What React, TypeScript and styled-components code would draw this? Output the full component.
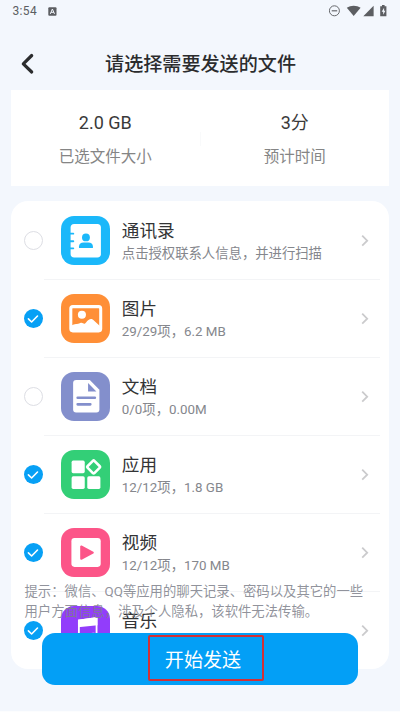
import React, { useState } from "react";
import styled, { createGlobalStyle } from "styled-components";

const GlobalStyle = createGlobalStyle`
  *, *::before, *::after { box-sizing: border-box; }
  body {
    margin: 0;
    background: #f3f7fd;
    font-family: Roboto, "Noto Sans CJK SC", sans-serif;
    color: #333;
  }
`;

const Screen = styled.div`
  position: relative;
  width: 400px;
  height: 712px;
  overflow: hidden;
  background: #f3f7fd;
  border-bottom: 1px solid #fcfdfe;
`;

const StatusBar = styled.div`
  height: 22px;
  padding: 0 13px 0 12.5px;
  display: flex;
  align-items: center;
  justify-content: space-between;
  color: #5c5e62;
`;

const StatusGroup = styled.div<{ $gap: number }>`
  display: flex;
  align-items: center;
  gap: ${(p) => p.$gap}px;
  svg { display: block; }
`;

const Clock = styled.span`
  padding-top: 1px;
  font-size: 12px;
  line-height: 21px;
  letter-spacing: 0.35px;
`;

const Header = styled.header`
  height: 68px;
  padding-top: 15px;
  display: grid;
  grid-template-columns: 60px 1fr 59px;
  align-items: center;
`;

const BackButton = styled.button`
  border: 0;
  padding: 0 0 0 20px;
  background: none;
  display: flex;
`;

const Title = styled.h1`
  margin: 2px 0 0;
  font-size: 19.1px;
  line-height: 28px;
  font-weight: 500;
  text-align: center;
  white-space: nowrap;
  color: #2b2c2e;
`;

const Summary = styled.section`
  height: 96px;
  margin: 0 11px;
  padding-top: 2px;
  background: #fff;
  display: grid;
  grid-template-columns: 1fr 1px 1fr;
  align-items: center;
`;

const Stat = styled.div`
  text-align: center;
`;

const StatValue = styled.div`
  font-size: 18px;
  line-height: 28px;
  color: #3a3a3a;
`;

const StatLabel = styled.div`
  margin-top: 8px;
  font-size: 15.5px;
  line-height: 24px;
  color: #858585;
`;

const StatDivider = styled.div`
  height: 14px;
  background: #f9fafb;
`;

const FileList = styled.section`
  height: 468px;
  margin: 15px 11px 0;
  border-radius: 17px;
  background: #fff;
`;

const Row = styled.div`
  height: 78px;
  padding-left: 12.5px;
  display: grid;
  grid-template-columns: 20px 1fr;
`;

const Check = styled.button<{ $on: boolean }>`
  align-self: center;
  width: 19.6px;
  height: 19.6px;
  margin-top: 1px;
  padding: 0;
  border: ${(p) => (p.$on ? "0" : "1.5px solid #dddee4")};
  border-radius: 50%;
  background: ${(p) => (p.$on ? "#07a0f5" : "#fff")};
  display: flex;
  align-items: center;
  justify-content: center;
`;

const RowBody = styled.div<{ $last: boolean }>`
  margin: 0 9px 0 0.5px;
  padding: 0 11px 0 17px;
  display: flex;
  align-items: center;
  box-shadow: 0 1px 0 ${(p) => (p.$last ? "transparent" : "#f3f4f6")};
`;

const Tile = styled.div<{ $color: string }>`
  flex: none;
  width: 48.5px;
  height: 48.5px;
  margin-top: 0.5px;
  border-radius: 13px;
  background: ${(p) => p.$color};
  svg { display: block; }
`;

const RowText = styled.div`
  flex: 1;
  margin-left: 12.3px;
  padding-top: 3px;
  white-space: nowrap;
`;

const RowName = styled.div`
  font-size: 17.6px;
  line-height: 25px;
  color: #333436;
`;

const RowDetail = styled.div`
  font-size: 13.35px;
  line-height: 20px;
  color: #85878d;
`;

const Footer = styled.footer`
  position: absolute;
  left: 0;
  right: 0;
  top: 582px;
`;

const Hint = styled.p`
  margin: 0 24px 11px 24.5px;
  font-size: 13.35px;
  line-height: 20px;
  white-space: nowrap;
  color: rgba(125, 128, 138, 0.85);
`;

const SendButton = styled.button`
  display: flex;
  align-items: center;
  justify-content: center;
  width: 316px;
  height: 52px;
  margin-left: 42px;
  padding: 0 0 0 12px;
  border: 0;
  border-radius: 13px;
  background: #039ff6;
  font-family: inherit;
  font-size: 19.1px;
  color: #fff;
`;

const Highlight = styled.span`
  display: flex;
  align-items: center;
  justify-content: center;
  width: 116px;
  height: 46px;
  margin-top: -2px;
  padding: 1px 6px 0 0;
  border: 2px solid #d23036;
  border-radius: 2px;
`;

const ContactsIcon = () => (
  <svg width="48.5" height="48.5" viewBox="0 0 48 48">
    <rect x="9.5" y="8" width="30" height="33" rx="3.5" fill="#fff" />
    <path d="M8 17.5h4.2M8 25h4.2M8 32h4.2" stroke="#1bb8fa" strokeWidth="1.8" strokeLinecap="round" />
    <circle cx="24.7" cy="21.2" r="3.9" fill="#1bb8fa" />
    <path d="M17.8 31.7v-1.4c0-2.7 2-4.1 4.4-4.1h5c2.4 0 4.4 1.4 4.4 4.1v1.4z" fill="#1bb8fa" />
  </svg>
);

const PictureIcon = () => (
  <svg width="48.5" height="48.5" viewBox="0 0 48 48">
    <rect x="9.7" y="12.5" width="29.6" height="24" rx="2" fill="none" stroke="#fff" strokeWidth="3" />
    <circle cx="20.7" cy="20.6" r="4" fill="#fff" />
    <path d="M10 31.5C14 29 16 30.5 19 28.8c2.8-1.6 3.4 2.6 5.8-.6 2.4-3.4 5.5-4.7 8-1.8l6 5.5V37H10z" fill="#fff" />
  </svg>
);

const DocumentIcon = () => (
  <svg width="48.5" height="48.5" viewBox="0 0 48 48">
    <path d="M15 8h13.5L38 17.5V37a3 3 0 0 1-3 3H15a3 3 0 0 1-3-3V11a3 3 0 0 1 3-3z" fill="#fff" />
    <path d="M26.8 11v8.2h8.2z" fill="#838fcc" />
    <path d="M16.5 25.5h17M16.5 32h12.5" stroke="#838fcc" strokeWidth="2.6" strokeLinecap="round" />
  </svg>
);

const AppsIcon = () => (
  <svg width="48.5" height="48.5" viewBox="0 0 48 48" fill="#fff">
    <rect x="10.5" y="10.5" width="13" height="12.5" rx="1.6" />
    <rect x="10.5" y="26" width="13" height="12.5" rx="1.6" />
    <rect x="26" y="26" width="13" height="12.5" rx="1.6" />
    <rect x="27.5" y="12" width="9.6" height="9.6" rx="1" transform="rotate(45 32.3 16.8)" fill="none" stroke="#fff" strokeWidth="2.6" />
  </svg>
);

const VideoIcon = () => (
  <svg width="48.5" height="48.5" viewBox="0 0 48 48">
    <rect x="10.3" y="10" width="29" height="28.5" rx="3" fill="#fff" />
    <path d="M20 18.3v12.2l11.5-6.1z" fill="#fc5588" stroke="#fc5588" strokeWidth="2" strokeLinejoin="round" />
  </svg>
);

const MusicIcon = () => (
  <svg width="48.5" height="48.5" viewBox="0 0 48 48">
    <path d="M17.7 33V14.5L35.2 12v19" fill="none" stroke="#fff" strokeWidth="1.8" />
    <path d="M16.8 13.5L36.1 11v8L16.8 21z" fill="#fff" />
    <ellipse cx="14.5" cy="34" rx="4.2" ry="4.4" fill="#fff" />
    <ellipse cx="32" cy="30.2" rx="4.1" ry="3.8" fill="#fff" />
  </svg>
);

const files = [
  { name: "通讯录", detail: "点击授权联系人信息，并进行扫描", on: false, color: "#1bb8fa", icon: <ContactsIcon /> },
  { name: "图片", detail: "29/29项，6.2 MB", on: true, color: "#ff8f37", icon: <PictureIcon /> },
  { name: "文档", detail: "0/0项，0.00M", on: false, color: "#838fcc", icon: <DocumentIcon /> },
  { name: "应用", detail: "12/12项，1.8 GB", on: true, color: "#33cf77", icon: <AppsIcon /> },
  { name: "视频", detail: "12/12项，170 MB", on: true, color: "#fc5588", icon: <VideoIcon /> },
  { name: "音乐", detail: "\u00a0", on: true, color: "#923dfb", icon: <MusicIcon /> },
];

export default function App() {
  const [selected, setSelected] = useState(files.map((f) => f.on));
  const toggle = (index: number) =>
    setSelected((current) => current.map((on, i) => (i === index ? !on : on)));

  return (
    <>
      <GlobalStyle />
      <Screen>
        <StatusBar>
          <StatusGroup $gap={11}>
            <Clock>3:54</Clock>
            <svg width="9" height="9" viewBox="0 0 9 9">
              <rect x="0.3" y="0.3" width="8.2" height="8.4" rx="1" fill="#5c5e62" />
              <path d="M2.3 6.9L4.4 2l2.1 4.9M3 5.3h2.8" fill="none" stroke="#f3f7fd" strokeWidth="1" />
            </svg>
          </StatusGroup>
          <StatusGroup $gap={0}>
            <svg width="58" height="14" viewBox="0 0 58 14">
              <circle cx="5.4" cy="6.8" r="5" fill="none" stroke="#66686c" />
              <path d="M2.7 6.8h5.5" stroke="#66686c" strokeWidth="1.2" />
              <path d="M17.8 3.8c3.9-2.9 9.9-2.9 13.8 0L24.7 12z" fill="#5c5e62" />
              <path d="M44.6 1.8v10.4H34.3z" fill="#5c5e62" />
              <path d="M51.2 2.3H53V1h2.6v1.3h1.8v9.9h-6.2z" fill="#5c5e62" />
              <path d="M55.1 3.8l-2.4 4h1.5v3l2.2-4h-1.3z" fill="#f3f7fd" />
            </svg>
          </StatusGroup>
        </StatusBar>

        <Header>
          <BackButton aria-label="返回">
            <svg width="16" height="22" viewBox="0 0 16 22" fill="none" stroke="#2b2c2e" strokeWidth="3.2" strokeLinecap="round" strokeLinejoin="round">
              <path d="M11.7 2.5L3.3 10.8L11.7 19" />
            </svg>
          </BackButton>
          <Title>请选择需要发送的文件</Title>
        </Header>

        <Summary>
          <Stat>
            <StatValue>2.0 GB</StatValue>
            <StatLabel>已选文件大小</StatLabel>
          </Stat>
          <StatDivider />
          <Stat>
            <StatValue>3分</StatValue>
            <StatLabel>预计时间</StatLabel>
          </Stat>
        </Summary>

        <FileList>
          {files.map((file, i) => (
            <Row key={file.name}>
              <Check $on={selected[i]} aria-label={file.name} onClick={() => toggle(i)}>
                {selected[i] && (
                  <svg width="12" height="10" viewBox="0 0 12 10" fill="none" stroke="#fff" strokeWidth="1.6" strokeLinecap="round" strokeLinejoin="round">
                    <path d="M1.4 4.9l3.2 3.1L10.5 2" />
                  </svg>
                )}
              </Check>
              <RowBody $last={i === files.length - 1}>
                <Tile $color={file.color}>{file.icon}</Tile>
                <RowText>
                  <RowName>{file.name}</RowName>
                  <RowDetail>{file.detail}</RowDetail>
                </RowText>
                <svg width="8" height="13" viewBox="0 0 8 13" fill="none" stroke="#cbcbcd" strokeWidth="1.8">
                  <path d="M1.2 1.7l5 5-5 5" />
                </svg>
              </RowBody>
            </Row>
          ))}
        </FileList>

        <Footer>
          <Hint>
            提示：微信、QQ等应用的聊天记录、密码以及其它的一些
            <br />
            用户方面信息，涉及个人隐私，该软件无法传输。
          </Hint>
          <SendButton>
            <Highlight>开始发送</Highlight>
          </SendButton>
        </Footer>
      </Screen>
    </>
  );
}
